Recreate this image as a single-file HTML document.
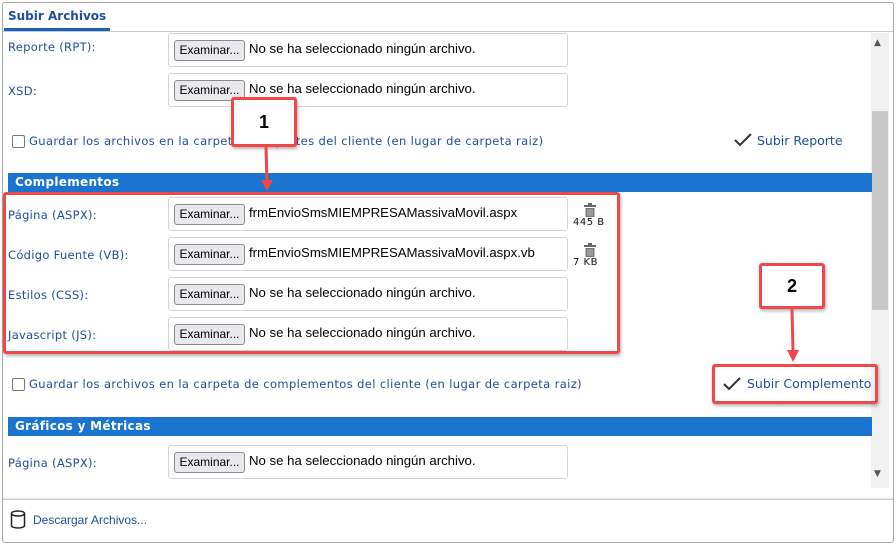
<!DOCTYPE html>
<html><head><meta charset="utf-8"><style>
*{box-sizing:border-box;margin:0;padding:0}
body{width:896px;height:545px;background:#fff;font-family:"DejaVu Sans","Liberation Sans",sans-serif;position:relative;overflow:hidden}
.a{position:absolute}
.frame{left:2px;top:2px;width:892px;height:541px;border:1px solid #a8a8a8;border-radius:3px}
.lbl{font-size:11.5px;color:#1d4f9c;left:8px;letter-spacing:.3px}
.box{left:168px;width:400px;height:34px;border:1px solid #d4d4d4;border-radius:3px}
.btn{position:absolute;left:5px;top:6px;width:71px;height:21px;border:1px solid #8a8a8a;border-radius:3px;background:#e9e9ed;font:12px "Liberation Sans",sans-serif;color:#000;text-align:center;line-height:19px}
.ft{position:absolute;left:80px;top:7px;font:13.2px "Liberation Sans",sans-serif;color:#000;white-space:nowrap}
.hdr{left:8px;width:864px;height:19px;background:#1b74d0;color:#fff;font-weight:bold;font-size:12px;padding-left:7px;line-height:19px;letter-spacing:.3px}
.chk{width:13px;height:13px;border:1px solid #777;border-radius:2px;background:#fff}
.ct{font-size:11.5px;color:#1d4f9c;letter-spacing:.38px;white-space:nowrap}
.sb{font-size:12.5px;color:#1d4f9c;letter-spacing:0;white-space:nowrap}
.red{border:3px solid #f04848;border-radius:3px;box-shadow:1px 2px 3px rgba(0,0,0,.3)}
.call{background:#fff;font:bold 18px "Liberation Sans",sans-serif;text-align:center}
.size{font-size:10px;color:#111;letter-spacing:.5px}
</style></head><body>
<div class="a frame"></div>
<div class="a" style="left:8px;top:9px;font-weight:bold;font-size:12px;color:#1d4f9c">Subir Archivos</div>
<div class="a" style="left:4px;top:28px;width:106px;height:3px;background:#1b5fb8"></div>
<div class="a" style="left:3px;top:31px;width:890px;height:1px;background:#c8c8c8"></div>
<div class="a" style="left:871px;top:33px;width:18px;height:455px;background:#f1f1f1"></div>
<div class="a" style="left:872px;top:111px;width:16px;height:199px;background:#c8c8c8"></div>
<div class="a" style="left:874px;top:38px;font-size:9px;color:#555">&#9650;</div>
<div class="a" style="left:874px;top:469px;font-size:9px;color:#555">&#9660;</div>

<div class="a lbl" style="top:40px">Reporte (RPT):</div>
<div class="a box" style="top:33px"><div class="btn">Examinar...</div><div class="ft">No se ha seleccionado ningún archivo.</div></div>
<div class="a lbl" style="top:84px">XSD:</div>
<div class="a box" style="top:73px"><div class="btn">Examinar...</div><div class="ft">No se ha seleccionado ningún archivo.</div></div>

<div class="a chk" style="left:12px;top:135px"></div>
<div class="a ct" style="left:29px;top:134px">Guardar los archivos en la carpeta de reportes del cliente (en lugar de carpeta raiz)</div>
<svg class="a" style="left:734px;top:133px" width="18" height="14" viewBox="0 0 18 14"><path d="M1 7l5 5L17 1" fill="none" stroke="#333" stroke-width="2"/></svg>
<div class="a sb" style="left:757px;top:133px">Subir Reporte</div>

<div class="a hdr" style="top:173px">Complementos</div>
<div class="a lbl" style="top:208px">Página (ASPX):</div>
<div class="a box" style="top:197px"><div class="btn">Examinar...</div><div class="ft">frmEnvioSmsMIEMPRESAMassivaMovil.aspx</div></div>
<div class="a lbl" style="top:248px">Código Fuente (VB):</div>
<div class="a box" style="top:237px"><div class="btn">Examinar...</div><div class="ft">frmEnvioSmsMIEMPRESAMassivaMovil.aspx.vb</div></div>
<div class="a lbl" style="top:288px">Estilos (CSS):</div>
<div class="a box" style="top:277px"><div class="btn">Examinar...</div><div class="ft">No se ha seleccionado ningún archivo.</div></div>
<div class="a lbl" style="top:328px">Javascript (JS):</div>
<div class="a box" style="top:317px"><div class="btn">Examinar...</div><div class="ft">No se ha seleccionado ningún archivo.</div></div>
<svg class="a" style="left:584px;top:203px" width="12" height="14" viewBox="0 0 12 14"><rect x="0" y="2" width="12" height="2" fill="#666"/><rect x="4" y="0" width="4" height="2" fill="#666"/><rect x="1.5" y="5" width="9" height="9" fill="#777"/><path d="M4 6v7M6 6v7M8 6v7" stroke="#bbb"/></svg>
<div class="a size" style="left:573px;top:217px">445 B</div>
<svg class="a" style="left:584px;top:243px" width="12" height="14" viewBox="0 0 12 14"><rect x="0" y="2" width="12" height="2" fill="#666"/><rect x="4" y="0" width="4" height="2" fill="#666"/><rect x="1.5" y="5" width="9" height="9" fill="#777"/><path d="M4 6v7M6 6v7M8 6v7" stroke="#bbb"/></svg>
<div class="a size" style="left:573px;top:257px">7 KB</div>

<div class="a chk" style="left:12px;top:378px"></div>
<div class="a ct" style="left:29px;top:377px">Guardar los archivos en la carpeta de complementos del cliente (en lugar de carpeta raiz)</div>
<svg class="a" style="left:723px;top:377px" width="18" height="14" viewBox="0 0 18 14"><path d="M1 7l5 5L17 1" fill="none" stroke="#333" stroke-width="2"/></svg>
<div class="a sb" style="left:747px;top:376px">Subir Complemento</div>

<div class="a hdr" style="top:417px">Gráficos y Métricas</div>
<div class="a lbl" style="top:456px">Página (ASPX):</div>
<div class="a box" style="top:445px"><div class="btn">Examinar...</div><div class="ft">No se ha seleccionado ningún archivo.</div></div>

<div class="a" style="left:3px;top:496px;width:890px;height:4px;background:linear-gradient(#fff,#e2e2e2)"></div>
<div class="a" style="left:3px;top:499px;width:890px;height:1px;background:#d0d0d0"></div>
<svg class="a" style="left:10px;top:510px" width="16" height="19" viewBox="0 0 16 19"><ellipse cx="8" cy="3.5" rx="6.5" ry="2.5" fill="none" stroke="#222" stroke-width="1.5"/><path d="M1.5 3.5v12c0 1.5 3 2.5 6.5 2.5s6.5-1 6.5-2.5v-12" fill="none" stroke="#222" stroke-width="1.5"/></svg>
<div class="a" style="left:33px;top:513px;font:12px 'Liberation Sans',sans-serif;color:#1d4f9c">Descargar Archivos...</div>

<div class="a red" style="left:3px;top:192px;width:617px;height:162px"></div>
<div class="a red" style="left:712px;top:364px;width:166px;height:40px"></div>
<div class="a red call" style="left:231px;top:97px;width:66px;height:50px;line-height:44px">1</div>
<div class="a red call" style="left:759px;top:263px;width:66px;height:46px;line-height:40px">2</div>
<svg class="a" style="left:0;top:0" width="896" height="545"><path d="M266 147L267 182" stroke="#f04848" stroke-width="3"/><path d="M261 180L267 191L273 180Z" fill="#f04848"/><path d="M792 309L793 352" stroke="#f04848" stroke-width="3"/><path d="M787 350L793 362L799 350Z" fill="#f04848"/></svg>
</body></html>
